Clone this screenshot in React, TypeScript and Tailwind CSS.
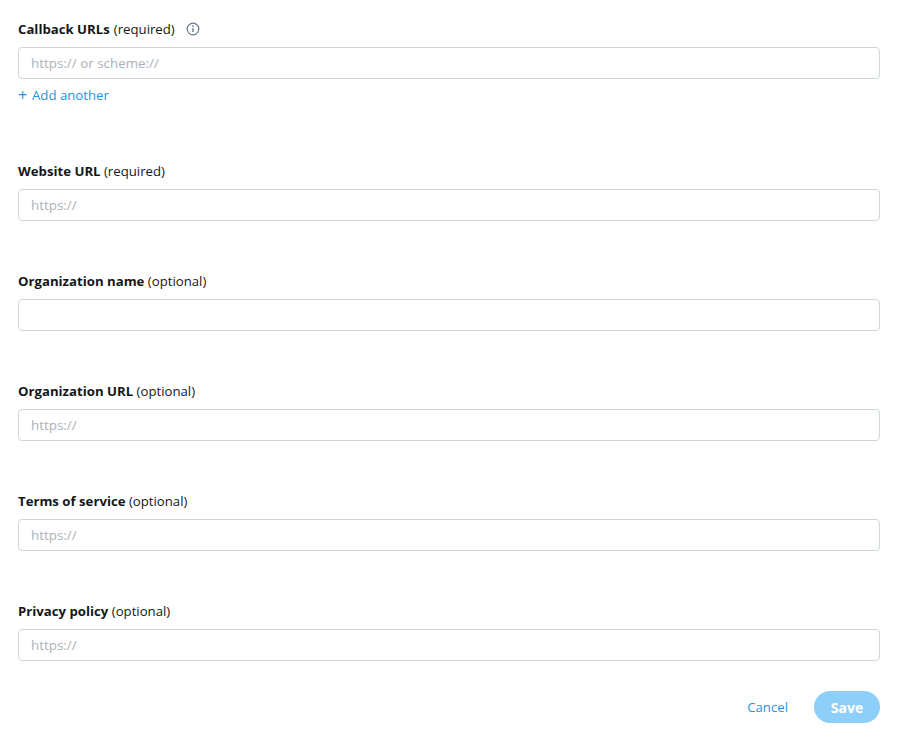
const fields = [
  { name: 'Website URL', hint: '(required)', placeholder: 'https://' },
  { name: 'Organization name', hint: '(optional)', placeholder: '' },
  { name: 'Organization URL', hint: '(optional)', placeholder: 'https://' },
  { name: 'Terms of service', hint: '(optional)', placeholder: 'https://' },
  { name: 'Privacy policy', hint: '(optional)', placeholder: 'https://' },
];

const inputClass =
  'block h-8 w-full rounded-[4px] border border-[#ccd6dd] bg-white px-3 text-[13.4px] text-[#14171a] outline-none placeholder:text-[#aab2b9]';

const InfoIcon = () => (
  <svg width="14" height="14" viewBox="0 0 14 14" fill="none" stroke="#657786" strokeWidth="1.2" className="block">
    <circle cx="7" cy="7" r="5.8" />
    <path d="M7 6.2v3.8" strokeWidth="1.4" />
    <path d="M7 3.6v1.4" strokeWidth="1.4" />
  </svg>
);

const App = () => {
  return (
    <div className="h-[755px] w-[899px] overflow-hidden bg-white pl-[18px] pr-[19px] pt-[19px] font-['Open_Sans','Noto_Sans',sans-serif] text-[13.2px] text-[#14171a]">
      <div className="flex h-5 items-center leading-5">
        <span className="font-bold">Callback URLs</span>
        <span className="ml-1">(required)</span>
        <span className="ml-[11px]">
          <InfoIcon />
        </span>
      </div>
      <input type="text" placeholder="https:// or scheme://" className={`${inputClass} mt-2`} />
      <div className="mt-[6px] flex h-5 items-center leading-5 text-[#1b95e0]">
        <span className="w-[14px] text-[16px]">+</span>
        <span>Add another</span>
      </div>

      <div className="flex flex-col gap-[50px] pt-[56px]">
        {fields.map((field) => (
          <div key={field.name}>
            <div className="h-5 leading-5">
              <span className="font-bold">{field.name}</span> <span>{field.hint}</span>
            </div>
            <input type="text" placeholder={field.placeholder} className={`${inputClass} mt-2`} />
          </div>
        ))}
      </div>

      <div className="mt-[30px] flex items-center justify-end">
        <button className="pt-[2px] text-[13.2px] text-[#1b95e0]">Cancel</button>
        <button className="ml-[26px] h-8 w-[66px] rounded-full bg-[#8dcff8] text-[14px] font-bold text-white">
          Save
        </button>
      </div>
    </div>
  );
};

export default App;
